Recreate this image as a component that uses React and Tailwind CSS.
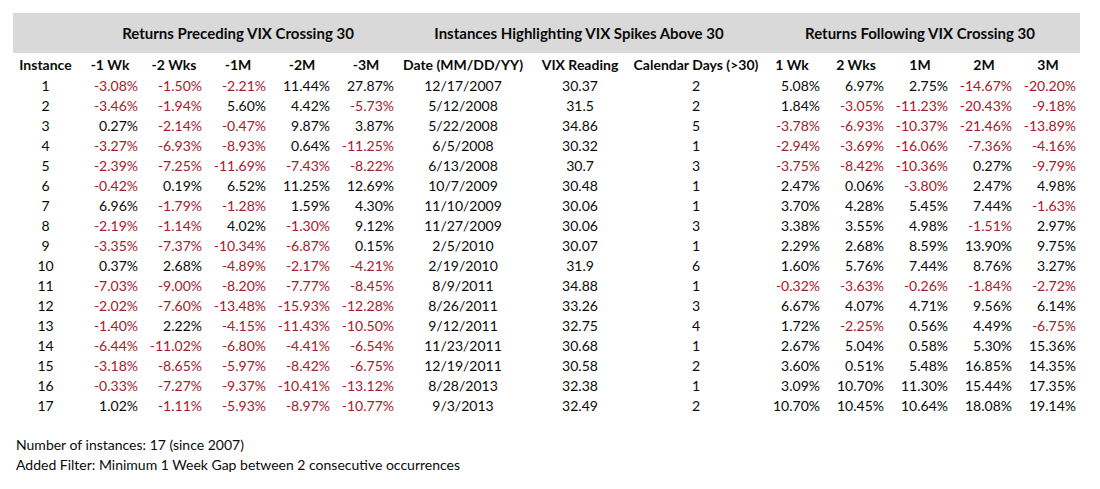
const rows = [
  ['1', '-3.08%', '-1.50%', '-2.21%', '11.44%', '27.87%', '12/17/2007', '30.37', '2', '5.08%', '6.97%', '2.75%', '-14.67%', '-20.20%'],
  ['2', '-3.46%', '-1.94%', '5.60%', '4.42%', '-5.73%', '5/12/2008', '31.5', '2', '1.84%', '-3.05%', '-11.23%', '-20.43%', '-9.18%'],
  ['3', '0.27%', '-2.14%', '-0.47%', '9.87%', '3.87%', '5/22/2008', '34.86', '5', '-3.78%', '-6.93%', '-10.37%', '-21.46%', '-13.89%'],
  ['4', '-3.27%', '-6.93%', '-8.93%', '0.64%', '-11.25%', '6/5/2008', '30.32', '1', '-2.94%', '-3.69%', '-16.06%', '-7.36%', '-4.16%'],
  ['5', '-2.39%', '-7.25%', '-11.69%', '-7.43%', '-8.22%', '6/13/2008', '30.7', '3', '-3.75%', '-8.42%', '-10.36%', '0.27%', '-9.79%'],
  ['6', '-0.42%', '0.19%', '6.52%', '11.25%', '12.69%', '10/7/2009', '30.48', '1', '2.47%', '0.06%', '-3.80%', '2.47%', '4.98%'],
  ['7', '6.96%', '-1.79%', '-1.28%', '1.59%', '4.30%', '11/10/2009', '30.06', '1', '3.70%', '4.28%', '5.45%', '7.44%', '-1.63%'],
  ['8', '-2.19%', '-1.14%', '4.02%', '-1.30%', '9.12%', '11/27/2009', '30.06', '3', '3.38%', '3.55%', '4.98%', '-1.51%', '2.97%'],
  ['9', '-3.35%', '-7.37%', '-10.34%', '-6.87%', '0.15%', '2/5/2010', '30.07', '1', '2.29%', '2.68%', '8.59%', '13.90%', '9.75%'],
  ['10', '0.37%', '2.68%', '-4.89%', '-2.17%', '-4.21%', '2/19/2010', '31.9', '6', '1.60%', '5.76%', '7.44%', '8.76%', '3.27%'],
  ['11', '-7.03%', '-9.00%', '-8.20%', '-7.77%', '-8.45%', '8/9/2011', '34.88', '1', '-0.32%', '-3.63%', '-0.26%', '-1.84%', '-2.72%'],
  ['12', '-2.02%', '-7.60%', '-13.48%', '-15.93%', '-12.28%', '8/26/2011', '33.26', '3', '6.67%', '4.07%', '4.71%', '9.56%', '6.14%'],
  ['13', '-1.40%', '2.22%', '-4.15%', '-11.43%', '-10.50%', '9/12/2011', '32.75', '4', '1.72%', '-2.25%', '0.56%', '4.49%', '-6.75%'],
  ['14', '-6.44%', '-11.02%', '-6.80%', '-4.41%', '-6.54%', '11/23/2011', '30.68', '1', '2.67%', '5.04%', '0.58%', '5.30%', '15.36%'],
  ['15', '-3.18%', '-8.65%', '-5.97%', '-8.42%', '-6.75%', '12/19/2011', '30.58', '2', '3.60%', '0.51%', '5.48%', '16.85%', '14.35%'],
  ['16', '-0.33%', '-7.27%', '-9.37%', '-10.41%', '-13.12%', '8/28/2013', '32.38', '1', '3.09%', '10.70%', '11.30%', '15.44%', '17.35%'],
  ['17', '1.02%', '-1.11%', '-5.93%', '-8.97%', '-10.77%', '9/3/2013', '32.49', '2', '10.70%', '10.45%', '10.64%', '18.08%', '19.14%'],
]

const headers = ['Instance', '-1 Wk', '-2 Wks', '-1M', '-2M', '-3M', 'Date (MM/DD/YY)', 'VIX Reading', 'Calendar Days (>30)', '1 Wk', '2 Wks', '1M', '2M', '3M']

// columns 1-5 and 9-13 hold percentages, right aligned
const isPct = (i) => (i >= 1 && i <= 5) || i >= 9

export default function App() {
  return (
    <div className="min-h-screen bg-white pl-[13px] pt-[13px] text-[14px] text-[#0a0a0a] font-['Lato',sans-serif]">
      <div className="grid w-[1067px] grid-cols-[65px_64px_64px_64px_64px_64px_130px_104px_128px_64px_64px_64px_64px_64px]">
        {/* group headers */}
        <div className="col-span-14 grid h-[40px] grid-cols-[65px_320px_362px_320px] items-center bg-[#d9d9d9] pt-[1px] text-[15px] font-bold">
          <div />
          <div className="text-center">Returns Preceding VIX Crossing 30</div>
          <div className="text-center">Instances Highlighting VIX Spikes Above 30</div>
          <div className="text-center">Returns Following VIX Crossing 30</div>
        </div>

        {headers.map((h) => (
          <div key={h} className="flex h-[22px] items-end justify-center whitespace-nowrap font-bold">
            {h}
          </div>
        ))}

        {rows.map((r) =>
          r.map((v, i) => (
            <div
              key={r[0] + '-' + i}
              className={
                'flex h-[20px] items-center whitespace-nowrap ' +
                (isPct(i) ? 'justify-end pr-[4px] ' : 'justify-center ') +
                (v.startsWith('-') ? 'text-[#a3202a]' : '')
              }
            >
              {v}
            </div>
          ))
        )}
      </div>

      <div className="mt-[20px] pl-[3px] leading-[20px]">
        <div>Number of instances: 17 (since 2007)</div>
        <div>Added Filter: Minimum 1 Week Gap between 2 consecutive occurrences</div>
      </div>
    </div>
  )
}
